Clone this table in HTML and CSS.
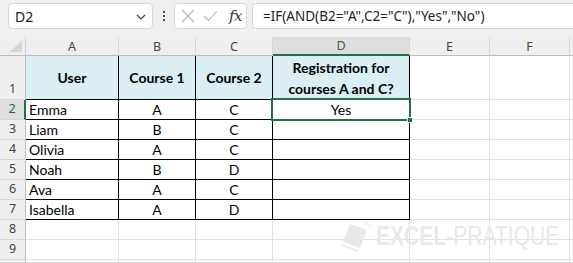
FILE: index.html
```html
<!DOCTYPE html>
<html>
<head>
<meta charset="utf-8">
<link rel="stylesheet" href="styles.css">
</head>
<body>
<div class="app">
  <div class="toolbar">
    <div class="namebox">
      <span class="ref">D2</span>
      <svg class="chev" width="10" height="6" viewBox="0 0 10 6"><path d="M1 1 L5 5 L9 1" fill="none" stroke="#444" stroke-width="1.2"/></svg>
    </div>
    <div class="dots"><i></i><i></i><i></i></div>
    <div class="fnbox">
      <svg width="14" height="14" viewBox="0 0 14 14"><path d="M1 1 L13 13 M13 1 L1 13" stroke="#b5b5b5" stroke-width="1.1" fill="none"/></svg>
      <svg width="15" height="12" viewBox="0 0 15 12"><path d="M1 6 L5.5 10.5 L14 1" stroke="#b5b5b5" stroke-width="1.1" fill="none"/></svg>
      <span class="fx">fx</span>
    </div>
    <div class="formula">=IF(AND(B2="A",C2="C"),"Yes","No")</div>
  </div>
  <div class="sheet">
    <div class="corner"><svg width="12" height="12" viewBox="0 0 12 12"><path d="M12 0 L12 12 L0 12 Z" fill="#d6d6d6"/></svg></div>
    <div class="ch">A</div><div class="ch">B</div><div class="ch">C</div><div class="ch sel">D</div><div class="ch">E</div><div class="ch">F</div><div class="ch last"></div>

    <div class="rh">1</div>
    <div class="c t th">User</div><div class="c t th">Course 1</div><div class="c t th">Course 2</div><div class="c t th">Registration for<br>courses A and C?</div><div class="c"></div><div class="c"></div><div class="c last"></div>

    <div class="rh sel">2</div>
    <div class="c t">Emma</div><div class="c t ctr">A</div><div class="c t ctr">C</div><div class="c t ctr">Yes</div><div class="c"></div><div class="c"></div><div class="c last"></div>

    <div class="rh">3</div>
    <div class="c t">Liam</div><div class="c t ctr">B</div><div class="c t ctr">C</div><div class="c t ctr"></div><div class="c"></div><div class="c"></div><div class="c last"></div>

    <div class="rh">4</div>
    <div class="c t">Olivia</div><div class="c t ctr">A</div><div class="c t ctr">C</div><div class="c t ctr"></div><div class="c"></div><div class="c"></div><div class="c last"></div>

    <div class="rh">5</div>
    <div class="c t">Noah</div><div class="c t ctr">B</div><div class="c t ctr">D</div><div class="c t ctr"></div><div class="c"></div><div class="c"></div><div class="c last"></div>

    <div class="rh">6</div>
    <div class="c t">Ava</div><div class="c t ctr">A</div><div class="c t ctr">C</div><div class="c t ctr"></div><div class="c"></div><div class="c"></div><div class="c last"></div>

    <div class="rh">7</div>
    <div class="c t">Isabella</div><div class="c t ctr">A</div><div class="c t ctr">D</div><div class="c t ctr"></div><div class="c"></div><div class="c"></div><div class="c last"></div>

    <div class="rh">8</div>
    <div class="c"></div><div class="c"></div><div class="c"></div><div class="c"></div><div class="c"></div><div class="c"></div><div class="c last"></div>

    <div class="rh">9</div>
    <div class="c"></div><div class="c"></div><div class="c"></div><div class="c"></div><div class="c"></div><div class="c"></div><div class="c last"></div>

    <div class="rh"></div>
    <div class="c"></div><div class="c"></div><div class="c"></div><div class="c"></div><div class="c"></div><div class="c"></div><div class="c last"></div>

    <div class="selection"><span class="handle"></span></div>
    <div class="watermark">
      <svg class="wm-logo" width="34" height="34" viewBox="0 0 34 34"><path d="M10 5 L27 11 L20 29 L3 23 Z" fill="#e9e9e9"/><path d="M2 26 L18 32" stroke="#ececec" stroke-width="2"/><circle cx="27" cy="4" r="1.5" fill="#ececec"/><circle cx="30" cy="7" r="1.2" fill="#ececec"/><circle cx="24" cy="2" r="1.2" fill="#ececec"/></svg>
      <span class="wm-text"><b>EXCEL</b>-PRATIQUE</span>
    </div>
  </div>
</div>
</body>
</html>
```

FILE: styles.css
```css
* { box-sizing: border-box; }
html, body { margin: 0; padding: 0; }
body { background: #f0f0f0; width: 573px; height: 263px; overflow: hidden; }
.app { display: flex; flex-direction: column; height: 263px; }

.toolbar {
  height: 37px;
  display: flex;
  align-items: flex-start;
  padding: 3px 0 0 8px;
  background: #f0f0f0;
}
.namebox {
  width: 145px; height: 26px;
  background: #fff;
  border: 1px solid #d8d8d8;
  border-radius: 4px;
  display: flex; align-items: center; justify-content: space-between;
  padding: 0 6px 0 6px;
  font-family: "Noto Sans", "Open Sans", sans-serif;
  font-size: 14px; color: #222;
}
.chev { margin-top: 2px; }
.dots { width: 21px; height: 26px; display: flex; flex-direction: column; align-items: center; justify-content: center; gap: 2px; }
.dots i { width: 2px; height: 2px; background: #444; display: block; }
.fnbox {
  width: 73px; height: 26px;
  background: #fff;
  border: 1px solid #d8d8d8;
  border-radius: 4px;
  display: flex; align-items: center;
  padding: 0 0 0 6px;
  gap: 8px;
}
.fx { font-family: "DejaVu Serif", "Liberation Serif", serif; font-style: italic; font-size: 15px; color: #333; margin-left: 3px; letter-spacing: -0.5px; }
.formula {
  margin-left: 5px;
  flex: 1;
  height: 26px;
  background: #fff;
  border: 1px solid #d8d8d8;
  border-right: none;
  border-radius: 4px 0 0 4px;
  padding: 0 0 0 10px;
  display: flex; align-items: center;
  font-family: "Noto Sans", "Open Sans", sans-serif;
  font-size: 13.5px; color: #222;
  white-space: nowrap;
}

.sheet {
  position: relative;
  height: 226px;
  display: grid;
  grid-template-columns: 26px 93px 77px 77px 137px 80px 80px 1fr;
  grid-template-rows: 19px 44px repeat(8, 20px) 3px;
  background: #fff;
  font-family: "Lato", "Liberation Sans", sans-serif;
  font-size: 14px;
  color: #000;
  overflow: hidden;
}
.corner { background: #efefef; border-right: 1px solid #d0d0d0; border-bottom: 1px solid #bdbdbd; display: flex; align-items: flex-end; justify-content: flex-end; padding: 0 3px 3px 0; }
.ch {
  background: #efefef;
  border-right: 1px solid #d6d6d6;
  border-bottom: 1px solid #bdbdbd;
  display: flex; align-items: center; justify-content: center;
  font-family: "Noto Sans", "Open Sans", sans-serif; font-size: 12.5px; color: #444;
}
.ch.sel { background: #dedede; color: #1d6b40; border-bottom: 2px solid #217346; }
.ch.last { border-right: none; }
.rh {
  background: #efefef;
  border-right: 1px solid #bdbdbd;
  border-bottom: 1px solid #d6d6d6;
  display: flex; align-items: flex-end; justify-content: center;
  padding-bottom: 1px;
  font-family: "Noto Sans", "Open Sans", sans-serif; font-size: 12.5px; color: #444;
  line-height: 18px;
}
.rh.sel { background: #dedede; color: #1d6b40; border-right: 2px solid #217346; }
.c {
  border-right: 1px solid #e1e1e1;
  border-bottom: 1px solid #e1e1e1;
  display: flex; align-items: center;
  padding: 0 3px;
  white-space: nowrap;
  line-height: 19px;
}
.c.last { border-right: none; }
.c.t { border-right-color: #000; border-bottom-color: #000; }
.c.ctr { justify-content: center; }
.c.th { background: #daeef3; font-weight: bold; justify-content: center; text-align: center; line-height: 21px; }

.selection {
  position: absolute;
  left: 271px; top: 61px;
  width: 140px; height: 23px;
  border: 2px solid #217346;
  pointer-events: none;
}
.handle {
  position: absolute;
  right: -4px; bottom: -4px;
  width: 6px; height: 6px;
  background: #217346;
  border: 1px solid #fff;
}
.watermark {
  position: absolute;
  left: 340px; top: 182px;
  height: 34px;
  display: flex; align-items: center;
  pointer-events: none;
}
.wm-logo { margin-right: 2px; flex: none; }
.wm-text {
  font-family: "Liberation Sans", sans-serif;
  font-size: 27px;
  line-height: 30px;
  color: #e9e9e9;
  white-space: nowrap;
  display: inline-block;
  transform: scaleX(0.78);
  transform-origin: left center;
}
.wm-text b { font-weight: bold; }
```
